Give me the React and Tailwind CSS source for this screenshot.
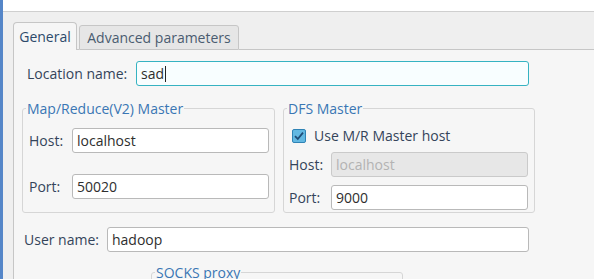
import React from "react";

const font = { fontFamily: '"Open Sans", "DejaVu Sans", sans-serif' };

function TextBox({ value, className = "", disabled = false, focused = false }) {
  const base = "h-[25px] shrink-0 rounded-[3px] border px-[4px] flex items-center text-[14px]";
  const look = disabled
    ? "bg-[#e7e7e7] border-[#cacaca] text-[#b3b3b3]"
    : focused
    ? "bg-[#f8feff] border-[#36b3c2] text-[#2e2e2e]"
    : "bg-white border-[#b9b9b9] text-[#2e2e2e]";
  return (
    <div className={`${base} ${look} ${className}`}>
      <span>{value}</span>
      {focused && <span className="w-px h-[16px] bg-[#222] ml-px" />}
    </div>
  );
}

function CheckBox() {
  return (
    <svg width="14" height="14" viewBox="0 0 14 14">
      <rect x="0.5" y="0.5" width="13" height="13" rx="1.5" fill="#62b8e2" stroke="#2f83b5" />
      <path d="M3 7.2 L5.8 10 L11 3.6" fill="none" stroke="#1f4d78" strokeWidth="1.8" />
    </svg>
  );
}

function Group({ title, className = "", children }) {
  return (
    <fieldset className={`shrink-0 border border-[#d6d6d6] rounded-[3px] ${className}`}>
      <legend className="ml-[3px] px-[1px] text-[14px] leading-[19px] text-[#3a76b4]">{title}</legend>
      {children}
    </fieldset>
  );
}

export default function App() {
  return (
    <div className="w-[594px] h-[279px] overflow-hidden flex bg-white" style={font}>
      <div className="w-[3px] shrink-0 bg-[#5586c8]" />
      <div className="flex-1 flex flex-col">
        <div className="h-[11px] shrink-0 bg-white" />
        <div className="h-px shrink-0 bg-[#cfcfcf]" />
        <div className="flex-1 flex flex-col bg-[#efefef] pl-[10px]">
          {/* tabs */}
          <div className="h-[38px] shrink-0 flex items-end">
            <div className="w-[64px] h-[28px] border border-b-0 border-[#c6c6c6] rounded-t-[4px] bg-[#f6f6f6] flex items-center justify-center text-[14px] text-[#2d4a6a]">
              General
            </div>
            <div className="w-[2px] h-full border-b border-[#c6c6c6]" />
            <div className="w-[160px] h-[25px] border border-[#c6c6c6] rounded-t-[3px] bg-[#e6e6e6] flex items-center justify-center text-[14px] text-[#4a5c70]">
              Advanced parameters
            </div>
            <div className="flex-1 h-full border-b border-[#c6c6c6]" />
          </div>

          {/* panel */}
          <div className="flex-1 flex flex-col bg-[#f6f6f6] border-l border-[#c6c6c6] pl-[1px]">
            <div className="shrink-0 flex items-center mt-[11px]">
              <span className="ml-[12px] w-[109px] text-[14px] text-[#34445a]">Location name:</span>
              <TextBox value="sad" focused className="w-[393px]" />
            </div>

            <div className="shrink-0 flex gap-[8px] mt-[13px] ml-[7px]">
              <Group title="Map/Reduce(V2) Master" className="w-[253px] h-[114px]">
                <div className="flex items-center mt-[10px] ml-[6px]">
                  <span className="w-[43px] text-[14px] text-[#34445a]">Host:</span>
                  <TextBox value="localhost" className="w-[197px]" />
                </div>
                <div className="flex items-center mt-[21px] ml-[6px]">
                  <span className="w-[43px] text-[14px] text-[#34445a]">Port:</span>
                  <TextBox value="50020" className="w-[197px]" />
                </div>
              </Group>

              <Group title="DFS Master" className="w-[252px] h-[114px]">
                <div className="flex items-center gap-[8px] ml-[8px] mt-[7px]">
                  <CheckBox />
                  <span className="text-[14px] text-[#34445a]">Use M/R Master host</span>
                </div>
                <div className="flex items-center mt-[6px] ml-[5px]">
                  <span className="w-[42px] text-[14px] text-[#34445a]">Host:</span>
                  <TextBox value="localhost" disabled className="w-[197px] h-[24px]" />
                </div>
                <div className="flex items-center mt-[8px] ml-[5px]">
                  <span className="w-[42px] text-[14px] text-[#34445a]">Port:</span>
                  <TextBox value="9000" className="w-[197px] h-[24px]" />
                </div>
              </Group>
            </div>

            <div className="shrink-0 flex items-center mt-[14px]">
              <span className="ml-[9px] w-[83px] text-[14px] text-[#34445a]">User name:</span>
              <TextBox value="hadoop" className="w-[422px]" />
            </div>

            <Group title="SOCKS proxy" className="w-[252px] h-[60px] mt-[11px] ml-[136px]" />
          </div>
        </div>
      </div>
    </div>
  );
}
